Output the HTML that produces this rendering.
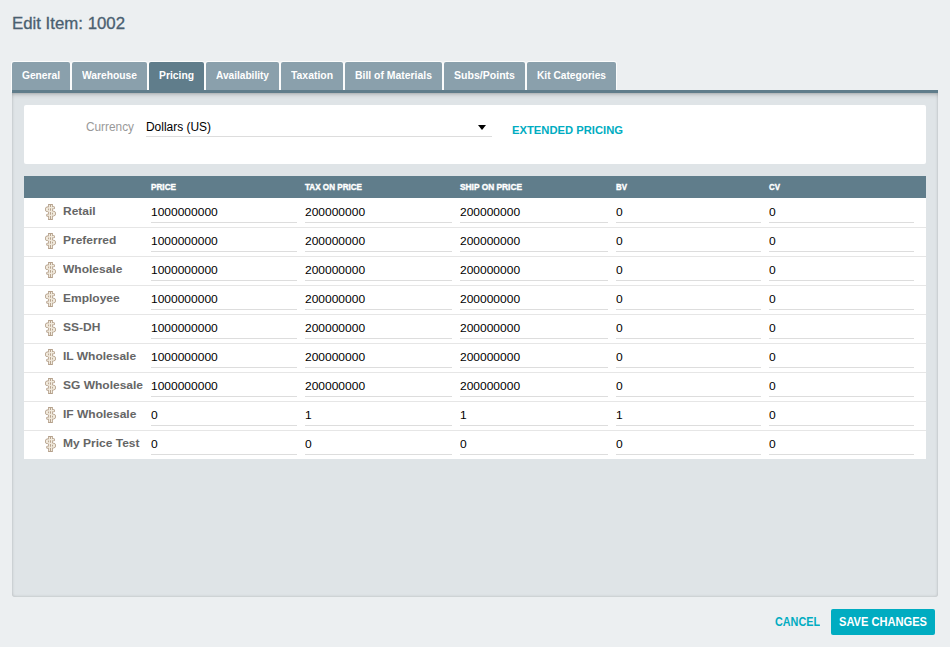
<!DOCTYPE html>
<html><head><meta charset="utf-8"><title>Edit Item</title>
<style>
*{margin:0;padding:0;box-sizing:border-box}
html,body{width:950px;height:647px;overflow:hidden}
body{background:#eceff1;font-family:"Liberation Sans",sans-serif;position:relative}
.a{position:absolute;white-space:nowrap}
.t{position:absolute;white-space:nowrap;display:inline-block;transform-origin:0 50%}
.title{left:12px;top:11.500px;-webkit-text-stroke:.3px #4a6070;font-size:16.500px;line-height:22px;color:#4a6070}
.tab{position:absolute;top:62px;height:29px;background:#8aa0ac;border-radius:2px 2px 0 0;box-shadow:0 0 0 1px rgba(255,255,255,.8)}
.tab.on{background:#607d8b}
.tl{top:68px;font-size:11.5px;line-height:14px;color:#fff;font-weight:bold}
.bar{left:12px;top:90px;width:926px;height:3px;background:#607d8b}
.panel{left:12px;top:93px;width:926px;height:504px;background:#dfe4e7;border-radius:0 0 3px 3px;box-shadow:inset 0 0 3px rgba(0,0,0,.22),inset 0 5px 4px -3px rgba(0,0,0,.15)}
.card{left:24px;top:105px;width:902px;height:59px;background:#fff;border-radius:2px}
.cur{left:85.500px;top:119px;font-size:13px;line-height:15px;color:#999}
.sel{left:146px;top:120px;font-size:12px;line-height:15px;color:#000}
.ul{position:absolute;height:1px;background:#ddd}
.ext{left:512px;top:122.500px;font-size:11.500px;line-height:14px;color:#00acc1;font-weight:bold}
.arrow{left:478px;top:125px;width:0;height:0;border-left:4px solid transparent;border-right:4px solid transparent;border-top:5px solid #000}
.thead{left:24px;top:176px;width:902px;height:22px;background:#607d8b}
.th{top:180.500px;font-size:10px;transform-origin:0 85%;line-height:12px;-webkit-text-stroke:.45px #fff;color:#fff;font-weight:bold}
.tbody{left:24px;top:198px;width:902px;height:261px;background:#fff}
.sep{position:absolute;left:24px;width:902px;height:1px;background:#e6e6e6}
.ic{position:absolute;left:42px}
.lab{left:63px;font-size:11.500px;transform:scaleX(1.0435);line-height:14px;color:#666;font-weight:bold}
.val{font-size:11.500px;transform:scaleX(1.0435);line-height:14px;color:#000}
.cancel{left:775px;top:615px;font-size:12px;line-height:14px;color:#00acc1;font-weight:bold}
.btn{left:831px;top:609px;width:104px;height:26px;background:#00acc1;border-radius:2px}
.save{left:839px;top:615px;font-size:12px;line-height:14px;color:#fff;font-weight:bold}
</style></head><body>
<div class="t title" style="transform:scaleX(1.0182)">Edit Item: 1002</div>
<div class="tab" style="left:12px;width:58px"></div><div class="t tl" style="left:22px;transform:scaleX(0.8873)">General</div>
<div class="tab" style="left:72px;width:75px"></div><div class="t tl" style="left:82px;transform:scaleX(0.8934)">Warehouse</div>
<div class="tab on" style="left:149px;width:55px"></div><div class="t tl" style="left:159px;transform:scaleX(0.8978)">Pricing</div>
<div class="tab" style="left:206px;width:73px"></div><div class="t tl" style="left:216px;transform:scaleX(0.8790)">Availability</div>
<div class="tab" style="left:281px;width:62px"></div><div class="t tl" style="left:291px;transform:scaleX(0.9044)">Taxation</div>
<div class="tab" style="left:345px;width:97px"></div><div class="t tl" style="left:355px;transform:scaleX(0.9059)">Bill of Materials</div>
<div class="tab" style="left:444px;width:81px"></div><div class="t tl" style="left:454px;transform:scaleX(0.9179)">Subs/Points</div>
<div class="tab" style="left:527px;width:89px"></div><div class="t tl" style="left:537px;transform:scaleX(0.8850)">Kit Categories</div>
<div class="a bar"></div><div class="a panel"></div>
<div class="a card"></div>
<div class="t cur" style="transform:scaleX(0.9100)">Currency</div>
<div class="t sel" style="transform:scaleX(0.9947)">Dollars (US)</div>
<div class="ul" style="left:146px;top:136px;width:346px"></div><div class="a arrow"></div>
<div class="t ext" style="transform:scaleX(0.9758)">EXTENDED PRICING</div>
<div class="a thead"></div>
<div class="t th" style="left:151px;transform:scale(0.8180,0.9)">PRICE</div><div class="t th" style="left:305px;transform:scale(0.8098,0.9)">TAX ON PRICE</div><div class="t th" style="left:460px;transform:scale(0.8347,0.9)">SHIP ON PRICE</div><div class="t th" style="left:616px;transform:scale(0.7910,0.9)">BV</div><div class="t th" style="left:769px;transform:scale(0.7910,0.9)">CV</div>
<div class="a tbody"></div>
<svg class="ic" style="top:203px" width="16" height="18" viewBox="0 0 16 18"><path d="M11.60 4.75C10.50 4.55 9.50 4.55 8.50 4.55C6.20 4.55 4.85 5.10 4.85 6.40C4.85 8.90 12.15 7.90 12.15 10.50C12.15 11.90 10.80 12.35 8.50 12.35C7.40 12.35 6.40 12.35 5.60 12.20" stroke="#b5a18c" stroke-width="2.90" fill="none" stroke-linecap="round" stroke-linejoin="round"/><path d="M5.16 5.48C4.96 5.73 4.85 6.04 4.85 6.40C4.85 6.73 4.97 6.99 5.19 7.21" stroke="#b5a18c" stroke-width="3.60" fill="none" stroke-linecap="round" stroke-linejoin="round"/><path d="M11.81 9.65C12.03 9.88 12.15 10.16 12.15 10.50C12.15 10.89 12.04 11.21 11.84 11.46" stroke="#b5a18c" stroke-width="3.60" fill="none" stroke-linecap="round" stroke-linejoin="round"/><path d="M7.42 2.45V15.55M9.52 2.45V15.55" stroke="#b5a18c" stroke-width="2.70" fill="none" stroke-linecap="square" stroke-linejoin="round"/><path d="M11.60 4.75C10.50 4.55 9.50 4.55 8.50 4.55C6.20 4.55 4.85 5.10 4.85 6.40C4.85 8.90 12.15 7.90 12.15 10.50C12.15 11.90 10.80 12.35 8.50 12.35C7.40 12.35 6.40 12.35 5.60 12.20" stroke="#f1eadd" stroke-width="1.30" fill="none" stroke-linecap="round" stroke-linejoin="round"/><path d="M5.16 5.48C4.96 5.73 4.85 6.04 4.85 6.40C4.85 6.73 4.97 6.99 5.19 7.21" stroke="#f1eadd" stroke-width="2.00" fill="none" stroke-linecap="round" stroke-linejoin="round"/><path d="M11.81 9.65C12.03 9.88 12.15 10.16 12.15 10.50C12.15 10.89 12.04 11.21 11.84 11.46" stroke="#f1eadd" stroke-width="2.00" fill="none" stroke-linecap="round" stroke-linejoin="round"/><path d="M7.42 2.45V15.55M9.52 2.45V15.55" stroke="#f1eadd" stroke-width="1.10" fill="none" stroke-linecap="square" stroke-linejoin="round"/></svg><div class="t lab" style="top:204px">Retail</div><div class="t val" style="left:151px;top:205px">1000000000</div><div class="ul" style="left:151px;top:222px;width:146px"></div><div class="t val" style="left:305px;top:205px">200000000</div><div class="ul" style="left:305px;top:222px;width:147px"></div><div class="t val" style="left:460px;top:205px">200000000</div><div class="ul" style="left:460px;top:222px;width:148px"></div><div class="t val" style="left:616px;top:205px">0</div><div class="ul" style="left:616px;top:222px;width:145px"></div><div class="t val" style="left:769px;top:205px">0</div><div class="ul" style="left:769px;top:222px;width:145px"></div><div class="sep" style="top:227px"></div>
<svg class="ic" style="top:232px" width="16" height="18" viewBox="0 0 16 18"><path d="M11.60 4.75C10.50 4.55 9.50 4.55 8.50 4.55C6.20 4.55 4.85 5.10 4.85 6.40C4.85 8.90 12.15 7.90 12.15 10.50C12.15 11.90 10.80 12.35 8.50 12.35C7.40 12.35 6.40 12.35 5.60 12.20" stroke="#b5a18c" stroke-width="2.90" fill="none" stroke-linecap="round" stroke-linejoin="round"/><path d="M5.16 5.48C4.96 5.73 4.85 6.04 4.85 6.40C4.85 6.73 4.97 6.99 5.19 7.21" stroke="#b5a18c" stroke-width="3.60" fill="none" stroke-linecap="round" stroke-linejoin="round"/><path d="M11.81 9.65C12.03 9.88 12.15 10.16 12.15 10.50C12.15 10.89 12.04 11.21 11.84 11.46" stroke="#b5a18c" stroke-width="3.60" fill="none" stroke-linecap="round" stroke-linejoin="round"/><path d="M7.42 2.45V15.55M9.52 2.45V15.55" stroke="#b5a18c" stroke-width="2.70" fill="none" stroke-linecap="square" stroke-linejoin="round"/><path d="M11.60 4.75C10.50 4.55 9.50 4.55 8.50 4.55C6.20 4.55 4.85 5.10 4.85 6.40C4.85 8.90 12.15 7.90 12.15 10.50C12.15 11.90 10.80 12.35 8.50 12.35C7.40 12.35 6.40 12.35 5.60 12.20" stroke="#f1eadd" stroke-width="1.30" fill="none" stroke-linecap="round" stroke-linejoin="round"/><path d="M5.16 5.48C4.96 5.73 4.85 6.04 4.85 6.40C4.85 6.73 4.97 6.99 5.19 7.21" stroke="#f1eadd" stroke-width="2.00" fill="none" stroke-linecap="round" stroke-linejoin="round"/><path d="M11.81 9.65C12.03 9.88 12.15 10.16 12.15 10.50C12.15 10.89 12.04 11.21 11.84 11.46" stroke="#f1eadd" stroke-width="2.00" fill="none" stroke-linecap="round" stroke-linejoin="round"/><path d="M7.42 2.45V15.55M9.52 2.45V15.55" stroke="#f1eadd" stroke-width="1.10" fill="none" stroke-linecap="square" stroke-linejoin="round"/></svg><div class="t lab" style="top:233px">Preferred</div><div class="t val" style="left:151px;top:234px">1000000000</div><div class="ul" style="left:151px;top:251px;width:146px"></div><div class="t val" style="left:305px;top:234px">200000000</div><div class="ul" style="left:305px;top:251px;width:147px"></div><div class="t val" style="left:460px;top:234px">200000000</div><div class="ul" style="left:460px;top:251px;width:148px"></div><div class="t val" style="left:616px;top:234px">0</div><div class="ul" style="left:616px;top:251px;width:145px"></div><div class="t val" style="left:769px;top:234px">0</div><div class="ul" style="left:769px;top:251px;width:145px"></div><div class="sep" style="top:256px"></div>
<svg class="ic" style="top:261px" width="16" height="18" viewBox="0 0 16 18"><path d="M11.60 4.75C10.50 4.55 9.50 4.55 8.50 4.55C6.20 4.55 4.85 5.10 4.85 6.40C4.85 8.90 12.15 7.90 12.15 10.50C12.15 11.90 10.80 12.35 8.50 12.35C7.40 12.35 6.40 12.35 5.60 12.20" stroke="#b5a18c" stroke-width="2.90" fill="none" stroke-linecap="round" stroke-linejoin="round"/><path d="M5.16 5.48C4.96 5.73 4.85 6.04 4.85 6.40C4.85 6.73 4.97 6.99 5.19 7.21" stroke="#b5a18c" stroke-width="3.60" fill="none" stroke-linecap="round" stroke-linejoin="round"/><path d="M11.81 9.65C12.03 9.88 12.15 10.16 12.15 10.50C12.15 10.89 12.04 11.21 11.84 11.46" stroke="#b5a18c" stroke-width="3.60" fill="none" stroke-linecap="round" stroke-linejoin="round"/><path d="M7.42 2.45V15.55M9.52 2.45V15.55" stroke="#b5a18c" stroke-width="2.70" fill="none" stroke-linecap="square" stroke-linejoin="round"/><path d="M11.60 4.75C10.50 4.55 9.50 4.55 8.50 4.55C6.20 4.55 4.85 5.10 4.85 6.40C4.85 8.90 12.15 7.90 12.15 10.50C12.15 11.90 10.80 12.35 8.50 12.35C7.40 12.35 6.40 12.35 5.60 12.20" stroke="#f1eadd" stroke-width="1.30" fill="none" stroke-linecap="round" stroke-linejoin="round"/><path d="M5.16 5.48C4.96 5.73 4.85 6.04 4.85 6.40C4.85 6.73 4.97 6.99 5.19 7.21" stroke="#f1eadd" stroke-width="2.00" fill="none" stroke-linecap="round" stroke-linejoin="round"/><path d="M11.81 9.65C12.03 9.88 12.15 10.16 12.15 10.50C12.15 10.89 12.04 11.21 11.84 11.46" stroke="#f1eadd" stroke-width="2.00" fill="none" stroke-linecap="round" stroke-linejoin="round"/><path d="M7.42 2.45V15.55M9.52 2.45V15.55" stroke="#f1eadd" stroke-width="1.10" fill="none" stroke-linecap="square" stroke-linejoin="round"/></svg><div class="t lab" style="top:262px">Wholesale</div><div class="t val" style="left:151px;top:263px">1000000000</div><div class="ul" style="left:151px;top:280px;width:146px"></div><div class="t val" style="left:305px;top:263px">200000000</div><div class="ul" style="left:305px;top:280px;width:147px"></div><div class="t val" style="left:460px;top:263px">200000000</div><div class="ul" style="left:460px;top:280px;width:148px"></div><div class="t val" style="left:616px;top:263px">0</div><div class="ul" style="left:616px;top:280px;width:145px"></div><div class="t val" style="left:769px;top:263px">0</div><div class="ul" style="left:769px;top:280px;width:145px"></div><div class="sep" style="top:285px"></div>
<svg class="ic" style="top:290px" width="16" height="18" viewBox="0 0 16 18"><path d="M11.60 4.75C10.50 4.55 9.50 4.55 8.50 4.55C6.20 4.55 4.85 5.10 4.85 6.40C4.85 8.90 12.15 7.90 12.15 10.50C12.15 11.90 10.80 12.35 8.50 12.35C7.40 12.35 6.40 12.35 5.60 12.20" stroke="#b5a18c" stroke-width="2.90" fill="none" stroke-linecap="round" stroke-linejoin="round"/><path d="M5.16 5.48C4.96 5.73 4.85 6.04 4.85 6.40C4.85 6.73 4.97 6.99 5.19 7.21" stroke="#b5a18c" stroke-width="3.60" fill="none" stroke-linecap="round" stroke-linejoin="round"/><path d="M11.81 9.65C12.03 9.88 12.15 10.16 12.15 10.50C12.15 10.89 12.04 11.21 11.84 11.46" stroke="#b5a18c" stroke-width="3.60" fill="none" stroke-linecap="round" stroke-linejoin="round"/><path d="M7.42 2.45V15.55M9.52 2.45V15.55" stroke="#b5a18c" stroke-width="2.70" fill="none" stroke-linecap="square" stroke-linejoin="round"/><path d="M11.60 4.75C10.50 4.55 9.50 4.55 8.50 4.55C6.20 4.55 4.85 5.10 4.85 6.40C4.85 8.90 12.15 7.90 12.15 10.50C12.15 11.90 10.80 12.35 8.50 12.35C7.40 12.35 6.40 12.35 5.60 12.20" stroke="#f1eadd" stroke-width="1.30" fill="none" stroke-linecap="round" stroke-linejoin="round"/><path d="M5.16 5.48C4.96 5.73 4.85 6.04 4.85 6.40C4.85 6.73 4.97 6.99 5.19 7.21" stroke="#f1eadd" stroke-width="2.00" fill="none" stroke-linecap="round" stroke-linejoin="round"/><path d="M11.81 9.65C12.03 9.88 12.15 10.16 12.15 10.50C12.15 10.89 12.04 11.21 11.84 11.46" stroke="#f1eadd" stroke-width="2.00" fill="none" stroke-linecap="round" stroke-linejoin="round"/><path d="M7.42 2.45V15.55M9.52 2.45V15.55" stroke="#f1eadd" stroke-width="1.10" fill="none" stroke-linecap="square" stroke-linejoin="round"/></svg><div class="t lab" style="top:291px">Employee</div><div class="t val" style="left:151px;top:292px">1000000000</div><div class="ul" style="left:151px;top:309px;width:146px"></div><div class="t val" style="left:305px;top:292px">200000000</div><div class="ul" style="left:305px;top:309px;width:147px"></div><div class="t val" style="left:460px;top:292px">200000000</div><div class="ul" style="left:460px;top:309px;width:148px"></div><div class="t val" style="left:616px;top:292px">0</div><div class="ul" style="left:616px;top:309px;width:145px"></div><div class="t val" style="left:769px;top:292px">0</div><div class="ul" style="left:769px;top:309px;width:145px"></div><div class="sep" style="top:314px"></div>
<svg class="ic" style="top:319px" width="16" height="18" viewBox="0 0 16 18"><path d="M11.60 4.75C10.50 4.55 9.50 4.55 8.50 4.55C6.20 4.55 4.85 5.10 4.85 6.40C4.85 8.90 12.15 7.90 12.15 10.50C12.15 11.90 10.80 12.35 8.50 12.35C7.40 12.35 6.40 12.35 5.60 12.20" stroke="#b5a18c" stroke-width="2.90" fill="none" stroke-linecap="round" stroke-linejoin="round"/><path d="M5.16 5.48C4.96 5.73 4.85 6.04 4.85 6.40C4.85 6.73 4.97 6.99 5.19 7.21" stroke="#b5a18c" stroke-width="3.60" fill="none" stroke-linecap="round" stroke-linejoin="round"/><path d="M11.81 9.65C12.03 9.88 12.15 10.16 12.15 10.50C12.15 10.89 12.04 11.21 11.84 11.46" stroke="#b5a18c" stroke-width="3.60" fill="none" stroke-linecap="round" stroke-linejoin="round"/><path d="M7.42 2.45V15.55M9.52 2.45V15.55" stroke="#b5a18c" stroke-width="2.70" fill="none" stroke-linecap="square" stroke-linejoin="round"/><path d="M11.60 4.75C10.50 4.55 9.50 4.55 8.50 4.55C6.20 4.55 4.85 5.10 4.85 6.40C4.85 8.90 12.15 7.90 12.15 10.50C12.15 11.90 10.80 12.35 8.50 12.35C7.40 12.35 6.40 12.35 5.60 12.20" stroke="#f1eadd" stroke-width="1.30" fill="none" stroke-linecap="round" stroke-linejoin="round"/><path d="M5.16 5.48C4.96 5.73 4.85 6.04 4.85 6.40C4.85 6.73 4.97 6.99 5.19 7.21" stroke="#f1eadd" stroke-width="2.00" fill="none" stroke-linecap="round" stroke-linejoin="round"/><path d="M11.81 9.65C12.03 9.88 12.15 10.16 12.15 10.50C12.15 10.89 12.04 11.21 11.84 11.46" stroke="#f1eadd" stroke-width="2.00" fill="none" stroke-linecap="round" stroke-linejoin="round"/><path d="M7.42 2.45V15.55M9.52 2.45V15.55" stroke="#f1eadd" stroke-width="1.10" fill="none" stroke-linecap="square" stroke-linejoin="round"/></svg><div class="t lab" style="top:320px">SS-DH</div><div class="t val" style="left:151px;top:321px">1000000000</div><div class="ul" style="left:151px;top:338px;width:146px"></div><div class="t val" style="left:305px;top:321px">200000000</div><div class="ul" style="left:305px;top:338px;width:147px"></div><div class="t val" style="left:460px;top:321px">200000000</div><div class="ul" style="left:460px;top:338px;width:148px"></div><div class="t val" style="left:616px;top:321px">0</div><div class="ul" style="left:616px;top:338px;width:145px"></div><div class="t val" style="left:769px;top:321px">0</div><div class="ul" style="left:769px;top:338px;width:145px"></div><div class="sep" style="top:343px"></div>
<svg class="ic" style="top:348px" width="16" height="18" viewBox="0 0 16 18"><path d="M11.60 4.75C10.50 4.55 9.50 4.55 8.50 4.55C6.20 4.55 4.85 5.10 4.85 6.40C4.85 8.90 12.15 7.90 12.15 10.50C12.15 11.90 10.80 12.35 8.50 12.35C7.40 12.35 6.40 12.35 5.60 12.20" stroke="#b5a18c" stroke-width="2.90" fill="none" stroke-linecap="round" stroke-linejoin="round"/><path d="M5.16 5.48C4.96 5.73 4.85 6.04 4.85 6.40C4.85 6.73 4.97 6.99 5.19 7.21" stroke="#b5a18c" stroke-width="3.60" fill="none" stroke-linecap="round" stroke-linejoin="round"/><path d="M11.81 9.65C12.03 9.88 12.15 10.16 12.15 10.50C12.15 10.89 12.04 11.21 11.84 11.46" stroke="#b5a18c" stroke-width="3.60" fill="none" stroke-linecap="round" stroke-linejoin="round"/><path d="M7.42 2.45V15.55M9.52 2.45V15.55" stroke="#b5a18c" stroke-width="2.70" fill="none" stroke-linecap="square" stroke-linejoin="round"/><path d="M11.60 4.75C10.50 4.55 9.50 4.55 8.50 4.55C6.20 4.55 4.85 5.10 4.85 6.40C4.85 8.90 12.15 7.90 12.15 10.50C12.15 11.90 10.80 12.35 8.50 12.35C7.40 12.35 6.40 12.35 5.60 12.20" stroke="#f1eadd" stroke-width="1.30" fill="none" stroke-linecap="round" stroke-linejoin="round"/><path d="M5.16 5.48C4.96 5.73 4.85 6.04 4.85 6.40C4.85 6.73 4.97 6.99 5.19 7.21" stroke="#f1eadd" stroke-width="2.00" fill="none" stroke-linecap="round" stroke-linejoin="round"/><path d="M11.81 9.65C12.03 9.88 12.15 10.16 12.15 10.50C12.15 10.89 12.04 11.21 11.84 11.46" stroke="#f1eadd" stroke-width="2.00" fill="none" stroke-linecap="round" stroke-linejoin="round"/><path d="M7.42 2.45V15.55M9.52 2.45V15.55" stroke="#f1eadd" stroke-width="1.10" fill="none" stroke-linecap="square" stroke-linejoin="round"/></svg><div class="t lab" style="top:349px">IL Wholesale</div><div class="t val" style="left:151px;top:350px">1000000000</div><div class="ul" style="left:151px;top:367px;width:146px"></div><div class="t val" style="left:305px;top:350px">200000000</div><div class="ul" style="left:305px;top:367px;width:147px"></div><div class="t val" style="left:460px;top:350px">200000000</div><div class="ul" style="left:460px;top:367px;width:148px"></div><div class="t val" style="left:616px;top:350px">0</div><div class="ul" style="left:616px;top:367px;width:145px"></div><div class="t val" style="left:769px;top:350px">0</div><div class="ul" style="left:769px;top:367px;width:145px"></div><div class="sep" style="top:372px"></div>
<svg class="ic" style="top:377px" width="16" height="18" viewBox="0 0 16 18"><path d="M11.60 4.75C10.50 4.55 9.50 4.55 8.50 4.55C6.20 4.55 4.85 5.10 4.85 6.40C4.85 8.90 12.15 7.90 12.15 10.50C12.15 11.90 10.80 12.35 8.50 12.35C7.40 12.35 6.40 12.35 5.60 12.20" stroke="#b5a18c" stroke-width="2.90" fill="none" stroke-linecap="round" stroke-linejoin="round"/><path d="M5.16 5.48C4.96 5.73 4.85 6.04 4.85 6.40C4.85 6.73 4.97 6.99 5.19 7.21" stroke="#b5a18c" stroke-width="3.60" fill="none" stroke-linecap="round" stroke-linejoin="round"/><path d="M11.81 9.65C12.03 9.88 12.15 10.16 12.15 10.50C12.15 10.89 12.04 11.21 11.84 11.46" stroke="#b5a18c" stroke-width="3.60" fill="none" stroke-linecap="round" stroke-linejoin="round"/><path d="M7.42 2.45V15.55M9.52 2.45V15.55" stroke="#b5a18c" stroke-width="2.70" fill="none" stroke-linecap="square" stroke-linejoin="round"/><path d="M11.60 4.75C10.50 4.55 9.50 4.55 8.50 4.55C6.20 4.55 4.85 5.10 4.85 6.40C4.85 8.90 12.15 7.90 12.15 10.50C12.15 11.90 10.80 12.35 8.50 12.35C7.40 12.35 6.40 12.35 5.60 12.20" stroke="#f1eadd" stroke-width="1.30" fill="none" stroke-linecap="round" stroke-linejoin="round"/><path d="M5.16 5.48C4.96 5.73 4.85 6.04 4.85 6.40C4.85 6.73 4.97 6.99 5.19 7.21" stroke="#f1eadd" stroke-width="2.00" fill="none" stroke-linecap="round" stroke-linejoin="round"/><path d="M11.81 9.65C12.03 9.88 12.15 10.16 12.15 10.50C12.15 10.89 12.04 11.21 11.84 11.46" stroke="#f1eadd" stroke-width="2.00" fill="none" stroke-linecap="round" stroke-linejoin="round"/><path d="M7.42 2.45V15.55M9.52 2.45V15.55" stroke="#f1eadd" stroke-width="1.10" fill="none" stroke-linecap="square" stroke-linejoin="round"/></svg><div class="t lab" style="top:378px">SG Wholesale</div><div class="t val" style="left:151px;top:379px">1000000000</div><div class="ul" style="left:151px;top:396px;width:146px"></div><div class="t val" style="left:305px;top:379px">200000000</div><div class="ul" style="left:305px;top:396px;width:147px"></div><div class="t val" style="left:460px;top:379px">200000000</div><div class="ul" style="left:460px;top:396px;width:148px"></div><div class="t val" style="left:616px;top:379px">0</div><div class="ul" style="left:616px;top:396px;width:145px"></div><div class="t val" style="left:769px;top:379px">0</div><div class="ul" style="left:769px;top:396px;width:145px"></div><div class="sep" style="top:401px"></div>
<svg class="ic" style="top:406px" width="16" height="18" viewBox="0 0 16 18"><path d="M11.60 4.75C10.50 4.55 9.50 4.55 8.50 4.55C6.20 4.55 4.85 5.10 4.85 6.40C4.85 8.90 12.15 7.90 12.15 10.50C12.15 11.90 10.80 12.35 8.50 12.35C7.40 12.35 6.40 12.35 5.60 12.20" stroke="#b5a18c" stroke-width="2.90" fill="none" stroke-linecap="round" stroke-linejoin="round"/><path d="M5.16 5.48C4.96 5.73 4.85 6.04 4.85 6.40C4.85 6.73 4.97 6.99 5.19 7.21" stroke="#b5a18c" stroke-width="3.60" fill="none" stroke-linecap="round" stroke-linejoin="round"/><path d="M11.81 9.65C12.03 9.88 12.15 10.16 12.15 10.50C12.15 10.89 12.04 11.21 11.84 11.46" stroke="#b5a18c" stroke-width="3.60" fill="none" stroke-linecap="round" stroke-linejoin="round"/><path d="M7.42 2.45V15.55M9.52 2.45V15.55" stroke="#b5a18c" stroke-width="2.70" fill="none" stroke-linecap="square" stroke-linejoin="round"/><path d="M11.60 4.75C10.50 4.55 9.50 4.55 8.50 4.55C6.20 4.55 4.85 5.10 4.85 6.40C4.85 8.90 12.15 7.90 12.15 10.50C12.15 11.90 10.80 12.35 8.50 12.35C7.40 12.35 6.40 12.35 5.60 12.20" stroke="#f1eadd" stroke-width="1.30" fill="none" stroke-linecap="round" stroke-linejoin="round"/><path d="M5.16 5.48C4.96 5.73 4.85 6.04 4.85 6.40C4.85 6.73 4.97 6.99 5.19 7.21" stroke="#f1eadd" stroke-width="2.00" fill="none" stroke-linecap="round" stroke-linejoin="round"/><path d="M11.81 9.65C12.03 9.88 12.15 10.16 12.15 10.50C12.15 10.89 12.04 11.21 11.84 11.46" stroke="#f1eadd" stroke-width="2.00" fill="none" stroke-linecap="round" stroke-linejoin="round"/><path d="M7.42 2.45V15.55M9.52 2.45V15.55" stroke="#f1eadd" stroke-width="1.10" fill="none" stroke-linecap="square" stroke-linejoin="round"/></svg><div class="t lab" style="top:407px">IF Wholesale</div><div class="t val" style="left:151px;top:408px">0</div><div class="ul" style="left:151px;top:425px;width:146px"></div><div class="t val" style="left:305px;top:408px">1</div><div class="ul" style="left:305px;top:425px;width:147px"></div><div class="t val" style="left:460px;top:408px">1</div><div class="ul" style="left:460px;top:425px;width:148px"></div><div class="t val" style="left:616px;top:408px">1</div><div class="ul" style="left:616px;top:425px;width:145px"></div><div class="t val" style="left:769px;top:408px">0</div><div class="ul" style="left:769px;top:425px;width:145px"></div><div class="sep" style="top:430px"></div>
<svg class="ic" style="top:435px" width="16" height="18" viewBox="0 0 16 18"><path d="M11.60 4.75C10.50 4.55 9.50 4.55 8.50 4.55C6.20 4.55 4.85 5.10 4.85 6.40C4.85 8.90 12.15 7.90 12.15 10.50C12.15 11.90 10.80 12.35 8.50 12.35C7.40 12.35 6.40 12.35 5.60 12.20" stroke="#b5a18c" stroke-width="2.90" fill="none" stroke-linecap="round" stroke-linejoin="round"/><path d="M5.16 5.48C4.96 5.73 4.85 6.04 4.85 6.40C4.85 6.73 4.97 6.99 5.19 7.21" stroke="#b5a18c" stroke-width="3.60" fill="none" stroke-linecap="round" stroke-linejoin="round"/><path d="M11.81 9.65C12.03 9.88 12.15 10.16 12.15 10.50C12.15 10.89 12.04 11.21 11.84 11.46" stroke="#b5a18c" stroke-width="3.60" fill="none" stroke-linecap="round" stroke-linejoin="round"/><path d="M7.42 2.45V15.55M9.52 2.45V15.55" stroke="#b5a18c" stroke-width="2.70" fill="none" stroke-linecap="square" stroke-linejoin="round"/><path d="M11.60 4.75C10.50 4.55 9.50 4.55 8.50 4.55C6.20 4.55 4.85 5.10 4.85 6.40C4.85 8.90 12.15 7.90 12.15 10.50C12.15 11.90 10.80 12.35 8.50 12.35C7.40 12.35 6.40 12.35 5.60 12.20" stroke="#f1eadd" stroke-width="1.30" fill="none" stroke-linecap="round" stroke-linejoin="round"/><path d="M5.16 5.48C4.96 5.73 4.85 6.04 4.85 6.40C4.85 6.73 4.97 6.99 5.19 7.21" stroke="#f1eadd" stroke-width="2.00" fill="none" stroke-linecap="round" stroke-linejoin="round"/><path d="M11.81 9.65C12.03 9.88 12.15 10.16 12.15 10.50C12.15 10.89 12.04 11.21 11.84 11.46" stroke="#f1eadd" stroke-width="2.00" fill="none" stroke-linecap="round" stroke-linejoin="round"/><path d="M7.42 2.45V15.55M9.52 2.45V15.55" stroke="#f1eadd" stroke-width="1.10" fill="none" stroke-linecap="square" stroke-linejoin="round"/></svg><div class="t lab" style="top:436px">My Price Test</div><div class="t val" style="left:151px;top:437px">0</div><div class="ul" style="left:151px;top:454px;width:146px"></div><div class="t val" style="left:305px;top:437px">0</div><div class="ul" style="left:305px;top:454px;width:147px"></div><div class="t val" style="left:460px;top:437px">0</div><div class="ul" style="left:460px;top:454px;width:148px"></div><div class="t val" style="left:616px;top:437px">0</div><div class="ul" style="left:616px;top:454px;width:145px"></div><div class="t val" style="left:769px;top:437px">0</div><div class="ul" style="left:769px;top:454px;width:145px"></div>
<div class="t cancel" style="transform:scaleX(0.9000)">CANCEL</div>
<div class="a btn"></div><div class="t save" style="transform:scaleX(0.9249)">SAVE CHANGES</div>
</body></html>
